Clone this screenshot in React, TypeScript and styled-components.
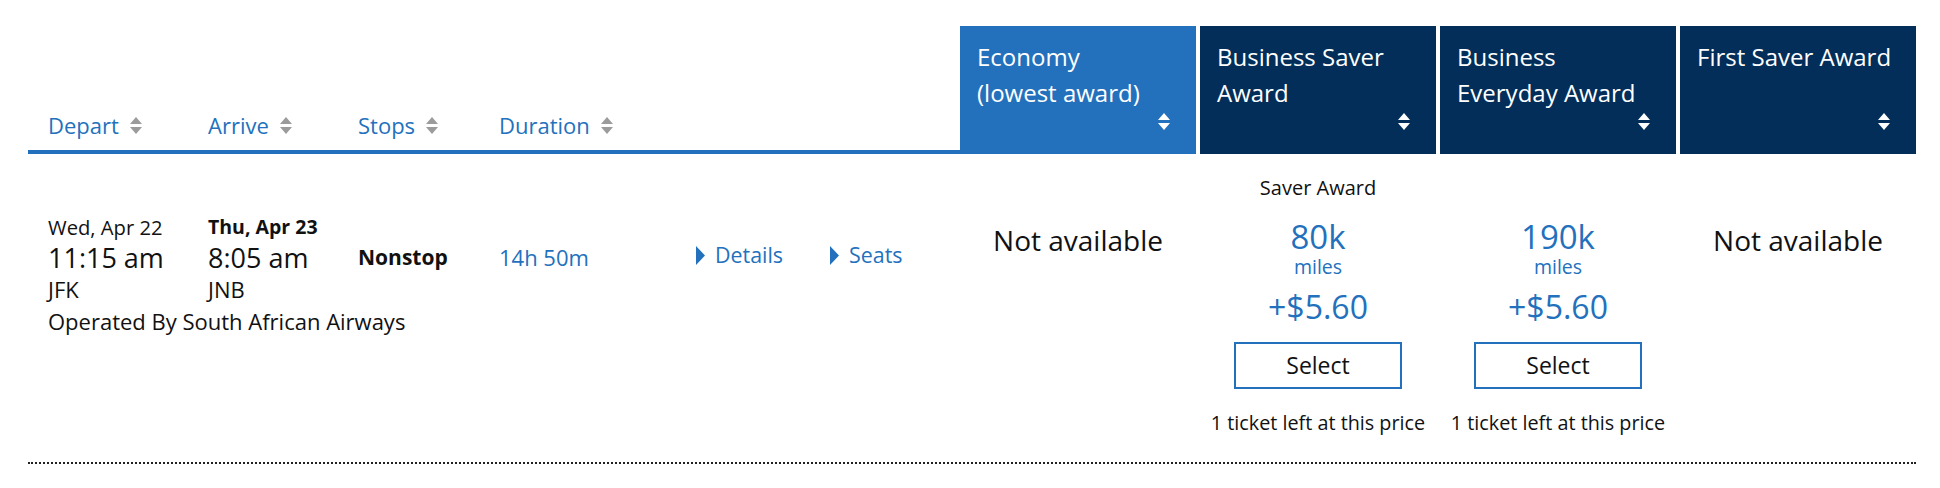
import React from "react";
import styled, { createGlobalStyle } from "styled-components";

const BLUE = "#2371bd";
const NAVY = "#022e59";
const INK = "#111111";

const GlobalStyle = createGlobalStyle`
  html, body { margin: 0; padding: 0; background: #ffffff; }
  body { font-family: "Open Sans", "Noto Sans", sans-serif; color: ${INK}; }
`;

const Page = styled.div`
  width: 1888px;
  margin: 26px 0 0 28px;
`;

const HeaderRow = styled.div`
  display: flex;
  height: 128px;
`;

const LeftHeader = styled.div`
  width: 932px;
  box-sizing: border-box;
  border-bottom: 4px solid ${BLUE};
  display: grid;
  grid-template-columns: 160px 150px 141px 197px 134px 1fr;
  padding: 0 0 12px 20px;
  align-items: end;
`;

const SortLabel = styled.div`
  display: flex;
  align-items: center;
  gap: 11px;
  font-size: 22px;
  line-height: 26px;
  color: ${BLUE};
  white-space: nowrap;
`;

const AwardHeaders = styled.div`
  display: flex;
  gap: 4px;
`;

const AwardHeader = styled.div<{ $light?: boolean }>`
  width: 236px;
  box-sizing: border-box;
  background: ${(p) => (p.$light ? BLUE : NAVY)};
  color: #ffffff;
  padding: 13px 26px 24px 17px;
  display: flex;
  flex-direction: column;
  justify-content: space-between;
  font-size: 24px;
  line-height: 36px;
  white-space: nowrap;
`;

const HeaderIcon = styled.div`
  align-self: flex-end;
  display: flex;
`;

const BodyRow = styled.div`
  display: flex;
  height: 310px;
  box-sizing: border-box;
  border-bottom: 2px dotted #222;
`;

const LeftBody = styled.div`
  width: 932px;
  display: grid;
  grid-template-columns: 160px 150px 141px 197px 134px 1fr;
  grid-template-rows: auto auto;
  align-items: start;
  align-content: start;
  padding: 60px 0 0 20px;
  box-sizing: border-box;
`;

const Endpoint = styled.div`
  display: flex;
  flex-direction: column;
`;

const DateLine = styled.div<{ $bold?: boolean }>`
  font-size: ${(p) => (p.$bold ? 19.5 : 20.2)}px;
  line-height: 26px;
  font-weight: ${(p) => (p.$bold ? 700 : 400)};
  white-space: nowrap;
`;

const TimeLine = styled.div`
  font-size: 27px;
  line-height: 36px;
  white-space: nowrap;
`;

const AirportLine = styled.div`
  font-size: 22px;
  line-height: 26px;
`;

const StopsCell = styled.div`
  margin-top: 30px;
  font-size: 21px;
  line-height: 26px;
  font-weight: 700;
  white-space: nowrap;
`;

const DurationCell = styled.div`
  margin-top: 30px;
  font-size: 22px;
  line-height: 26px;
  color: ${BLUE};
  white-space: nowrap;
`;

const LinkCell = styled.div`
  margin-top: 28px;
  display: flex;
  align-items: center;
  gap: 10px;
  font-size: 21.4px;
  line-height: 26px;
  color: ${BLUE};
  white-space: nowrap;
`;

const Operated = styled.div`
  grid-column: 1 / -1;
  margin-top: 7px;
  font-size: 22px;
  line-height: 24px;
  white-space: nowrap;
`;

const AwardCells = styled.div`
  display: flex;
  gap: 4px;
`;

const AwardCell = styled.div`
  width: 236px;
  display: flex;
  flex-direction: column;
  align-items: center;
  padding-top: 22px;
  box-sizing: border-box;
`;

const NotAvailable = styled.div`
  margin-top: 46px;
  font-size: 28px;
  line-height: 36px;
  white-space: nowrap;
`;

const FareLabel = styled.div`
  font-size: 20px;
  line-height: 24px;
  height: 24px;
  white-space: nowrap;
`;

const Miles = styled.div`
  margin-top: 18px;
  font-size: 33px;
  line-height: 38px;
  color: ${BLUE};
`;

const MilesUnit = styled.div`
  font-size: 19.5px;
  line-height: 22px;
  color: ${BLUE};
`;

const Fee = styled.div`
  margin-top: 10px;
  font-size: 32px;
  line-height: 38px;
  color: ${BLUE};
`;

const SelectButton = styled.button`
  margin-top: 16px;
  width: 168px;
  height: 47px;
  box-sizing: border-box;
  border: 2px solid ${BLUE};
  background: #ffffff;
  font-family: "Open Sans", "Noto Sans", sans-serif;
  font-size: 23px;
  line-height: 41px;
  color: ${INK};
  padding: 0;
  cursor: pointer;
`;

const TicketNote = styled.div`
  margin-top: 22px;
  font-size: 19.8px;
  line-height: 24px;
  white-space: nowrap;
`;

const SortIcon = ({ color }: { color: string }) => (
  <svg width="12" height="17" viewBox="0 0 12 17" aria-hidden="true">
    <path d="M6 0 L12 7 H0 Z" fill={color} />
    <path d="M0 10 H12 L6 17 Z" fill={color} />
  </svg>
);

const Caret = () => (
  <svg width="9" height="19" viewBox="0 0 9 19" aria-hidden="true">
    <path d="M0 0 L9 9.5 L0 19 Z" fill={BLUE} />
  </svg>
);

const sortCols = ["Depart", "Arrive", "Stops", "Duration"];

type Award = {
  header: React.ReactNode;
  light?: boolean;
  fare?: { label: string; miles: string; fee: string };
};

const awards: Award[] = [
  {
    header: (
      <>
        Economy
        <br />
        (lowest award)
      </>
    ),
    light: true,
  },
  {
    header: (
      <>
        Business Saver
        <br />
        Award
      </>
    ),
    fare: { label: "Saver Award", miles: "80k", fee: "+$5.60" },
  },
  {
    header: (
      <>
        Business
        <br />
        Everyday Award
      </>
    ),
    fare: { label: "", miles: "190k", fee: "+$5.60" },
  },
  { header: "First Saver Award" },
];

export default function App() {
  return (
    <>
      <GlobalStyle />
      <Page>
        <HeaderRow>
          <LeftHeader>
            {sortCols.map((c) => (
              <SortLabel key={c}>
                {c}
                <SortIcon color="#9b9b9b" />
              </SortLabel>
            ))}
          </LeftHeader>
          <AwardHeaders>
            {awards.map((a, i) => (
              <AwardHeader key={i} $light={a.light}>
                <div>{a.header}</div>
                <HeaderIcon>
                  <SortIcon color="#ffffff" />
                </HeaderIcon>
              </AwardHeader>
            ))}
          </AwardHeaders>
        </HeaderRow>
        <BodyRow>
          <LeftBody>
            <Endpoint>
              <DateLine>Wed, Apr 22</DateLine>
              <TimeLine>11:15 am</TimeLine>
              <AirportLine>JFK</AirportLine>
            </Endpoint>
            <Endpoint>
              <DateLine $bold>Thu, Apr 23</DateLine>
              <TimeLine>8:05 am</TimeLine>
              <AirportLine>JNB</AirportLine>
            </Endpoint>
            <StopsCell>Nonstop</StopsCell>
            <DurationCell>14h 50m</DurationCell>
            <LinkCell>
              <Caret />
              Details
            </LinkCell>
            <LinkCell>
              <Caret />
              Seats
            </LinkCell>
            <Operated>Operated By South African Airways</Operated>
          </LeftBody>
          <AwardCells>
            {awards.map((a, i) => (
              <AwardCell key={i}>
                {a.fare ? (
                  <>
                    <FareLabel>{a.fare.label}</FareLabel>
                    <Miles>{a.fare.miles}</Miles>
                    <MilesUnit>miles</MilesUnit>
                    <Fee>{a.fare.fee}</Fee>
                    <SelectButton>Select</SelectButton>
                    <TicketNote>1 ticket left at this price</TicketNote>
                  </>
                ) : (
                  <NotAvailable>Not available</NotAvailable>
                )}
              </AwardCell>
            ))}
          </AwardCells>
        </BodyRow>
      </Page>
    </>
  );
}
